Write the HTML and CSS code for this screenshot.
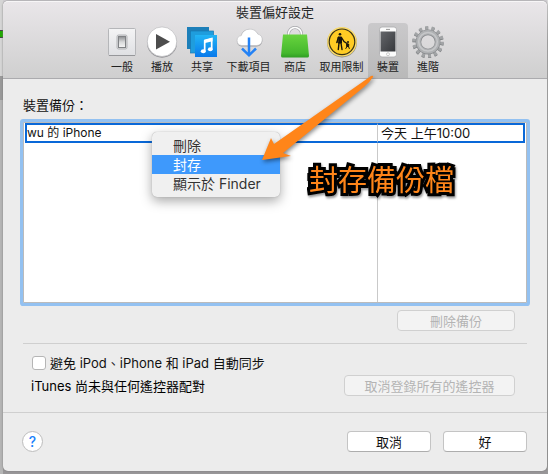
FILE: index.html
```html
<!DOCTYPE html>
<html lang="zh-Hant">
<head>
<meta charset="utf-8">
<title>裝置偏好設定</title>
<link rel="stylesheet" href="styles.css">
</head>
<body>
<main class="window">
  <header class="toolbar">
    <h1 class="title">裝置偏好設定</h1>
    <nav class="tabs">
      <button class="tab" type="button">
        <svg class="icon" viewBox="0 0 32 32"><defs><linearGradient id="plate" x2="0" y2="1"><stop stop-color="#f4f4f5"/><stop offset="1" stop-color="#dfe0e3"/></linearGradient><linearGradient id="knob" x2="0" y2="1"><stop stop-color="#8c8e91"/><stop offset=".5" stop-color="#d8d9da"/><stop offset="1" stop-color="#f6f6f6"/></linearGradient></defs><rect x="2.500" y="2.500" width="27" height="27" rx="1" fill="url(#plate)" stroke="#b5b6b9"/><path d="M3 29.500h26" stroke="#96979a"/><rect x="11" y="9" width="10" height="14" rx="1.500" fill="#d9dadc" stroke="#b3b4b7"/><rect x="12.500" y="10.500" width="7" height="11" fill="url(#knob)" stroke="#808285"/></svg>
        <span>一般</span>
      </button>
      <button class="tab" type="button">
        <svg class="icon" viewBox="0 0 32 32"><circle cx="16" cy="16.700" r="15" fill="#8f8f93"/><circle cx="16" cy="15.700" r="14.800" fill="#fff" stroke="#bcbcbf" stroke-width=".7"/><path d="M10 8v15.500l14-7.700z" fill="#4d4d4d"/></svg>
        <span>播放</span>
      </button>
      <button class="tab" type="button">
        <svg class="icon" viewBox="0 0 32 32"><defs><linearGradient id="note" x2="0" y2="1"><stop stop-color="#23b5f5"/><stop offset="1" stop-color="#0879eb"/></linearGradient></defs><rect x="1" y="1" width="22" height="22" fill="#1d7fb9"/><rect x="4.500" y="5" width="23" height="22" fill="#1f9ddd" stroke="#1878b2" stroke-width=".7"/><rect x="9" y="9" width="22" height="22" fill="url(#note)"/><path d="M18.700 25V14.800l7-1.900v10" fill="none" stroke="#fff" stroke-width="1.700"/><path d="M18 13.700l8.500-2.100v3.600L18 17.300z" fill="#fff"/><ellipse cx="17.300" cy="25.300" rx="2.500" ry="2" fill="#fff"/><ellipse cx="24.300" cy="23.200" rx="2.400" ry="2" fill="#fff"/></svg>
        <span>共享</span>
      </button>
      <button class="tab tab-wide" type="button">
        <svg class="icon" viewBox="0 0 32 32"><path d="M8.500 20.500a5.300 5.300 0 0 1-.8-10.300A9.300 9.300 0 0 1 25 8.400a6.200 6.200 0 0 1-1.300 12.100z" fill="#9c9ca0"/><path d="M8.500 19.500a5 5 0 0 1-.3-9.900 9 9 0 0 1 16.700-1.500 5.800 5.800 0 0 1-1.200 11.400z" fill="#fff" stroke="#c1c1c4" stroke-width=".7"/><path d="M16 11.500V29M9 22.500l7 6.800 7-6.800" fill="none" stroke="#2482f5" stroke-width="2.500"/></svg>
        <span>下載項目</span>
      </button>
      <button class="tab" type="button">
        <svg class="icon" viewBox="0 0 32 32"><defs><linearGradient id="bag" x2="0" y2="1"><stop stop-color="#68d43e"/><stop offset=".8" stop-color="#45b82d"/><stop offset="1" stop-color="#2f9e23"/></linearGradient></defs><path d="M9.500 12V8a6.500 6.500 0 0 1 13 0v4" fill="none" stroke="#a5a5a9" stroke-width="3"/><path d="M9.500 12V8a6.500 6.500 0 0 1 13 0v4" fill="none" stroke="#fff" stroke-width="1.600"/><path d="M4 8.500h24L30 30q-.2 1.500-1.500 1.500h-25Q2.200 31.500 2 30z" fill="url(#bag)"/></svg>
        <span>商店</span>
      </button>
      <button class="tab tab-wide" type="button">
        <svg class="icon" viewBox="0 0 32 32"><circle cx="16" cy="16.500" r="15" fill="#8f8e88"/><circle cx="16" cy="15.800" r="14.800" fill="#fbdc6c"/><circle cx="16" cy="15.800" r="12.800" fill="#ffcc24" stroke="#3a3314" stroke-width="1.200"/><g fill="#16140c" stroke="#16140c" stroke-linecap="round"><circle cx="14" cy="8.300" r="1.300" stroke="none"/><path d="M12.500 11h3v6h-3z"/><path d="M12.500 11.500l-1.700 5M15.500 11.500l2.500 4 3 2M13 17l-.7 6.500M15 17l1 6.500" fill="none" stroke-width="1.400"/><circle cx="22" cy="16" r="1" stroke="none"/><path d="M21 18h1.700v2.500h-1.700zM21 20.500l-1.200 2M22.500 20.500l.8 2" stroke-width="1"/></g></svg>
        <span>取用限制</span>
      </button>
      <button class="tab selected" type="button" aria-current="page">
        <svg class="icon" viewBox="0 0 32 32"><defs><linearGradient id="screen" x2="1" y2="1"><stop stop-color="#65676b"/><stop offset="1" stop-color="#36383c"/></linearGradient></defs><rect x="7.500" y="1" width="17" height="30" rx="2.500" fill="#fbfbfb" stroke="#a9aaac" stroke-width=".8"/><rect x="8.500" y="5.500" width="15" height="20" fill="url(#screen)"/><path d="M14 3.400h4" stroke="#999"/><circle cx="16" cy="28.200" r="1.500" fill="#fff" stroke="#b9b9b9" stroke-width=".7"/></svg>
        <span>裝置</span>
      </button>
      <button class="tab" type="button">
        <svg class="icon" viewBox="0 0 32 32"><g fill="none"><circle cx="16" cy="16.600" r="13.500" stroke="#7e8083" stroke-width="4.500" stroke-dasharray="2.800 3.259"/><circle cx="16" cy="15.800" r="13.500" stroke="#a2a4a6" stroke-width="4.500" stroke-dasharray="2.800 3.259"/><circle cx="16" cy="16" r="9.600" stroke="#87898c" stroke-width="5.600"/><circle cx="16" cy="15.800" r="9.600" stroke="#afb1b3" stroke-width="4.400"/><circle cx="16" cy="15.800" r="9.300" stroke="#c6c7c9" stroke-width="1.500"/></g></svg>
        <span>進階</span>
      </button>
    </nav>
  </header>

  <section class="content">
    <h2 class="list-label">裝置備份：</h2>
    <div class="list">
      <table class="backups" aria-label="裝置備份">
        <tbody>
          <tr class="focused"><td>wu 的 iPhone</td><td class="date">今天 上午10:00</td></tr>
          <tr class="filler"><td></td><td class="date"></td></tr>
        </tbody>
      </table>
    </div>
    <div class="list-actions"><button class="push medium" type="button" disabled>刪除備份</button></div>
    <div class="options">
      <label class="check"><input type="checkbox"><span>避免 iPod、iPhone 和 iPad 自動同步</span></label>
      <div class="remote">
        <p class="note">iTunes 尚未與任何遙控器配對</p>
        <button class="push large" type="button" disabled>取消登錄所有的遙控器</button>
      </div>
    </div>
  </section>

  <footer class="footer">
    <button class="help" type="button" aria-label="輔助說明">?</button>
    <button class="push small" type="button">取消</button>
    <button class="push small" type="button">好</button>
  </footer>

  <div class="menu" role="menu">
    <button type="button" role="menuitem">刪除</button>
    <button class="active" type="button" role="menuitem">封存</button>
    <button type="button" role="menuitem">顯示於 Finder</button>
  </div>
  <svg class="arrow" viewBox="0 0 116 90" aria-hidden="true"><path d="M112 2q3-1 2 1-3 5-9 10L24 79l8 3-29 4 9-22 3 6z" fill="#ff8519"/></svg>
  <p class="callout">封存備份檔</p>
</main>
</body>
</html>
```
FILE: styles.css
```css
* { box-sizing: border-box; }

body {
  margin: 0;
  min-height: 100vh;
  padding: 1px 1px 3px 3px;
  background:
    linear-gradient(#444 0 1px, #20a900 1px 7px, #444 7px 8px) 0 30px / 3px 8px no-repeat,
    linear-gradient(#d5d5d5 0 76px, #999 76px 100px, #b5b5b5 100px) 0 0 / 3px 100% no-repeat,
    linear-gradient(#ddd 0, #aaa 42px, #999) 100% 0 / 1px 100% no-repeat,
    linear-gradient(#cfcdd1 0 50%, #989698 50%);
  color: #111;
  font: 13px/20px Inter, "Noto Sans CJK TC", sans-serif;
}

button, input { margin: 0; font: inherit; color: inherit; }
h1, h2, p { margin: 0; font-size: inherit; font-weight: 400; }

.window {
  position: relative;
  background: #ececec;
  border-radius: 5px;
  box-shadow: 0 0 2px #777;
}

.toolbar {
  height: 78px;
  border-top: 1px solid #f7f6f7;
  border-bottom: 1px solid #ababae;
  border-radius: 5px 5px 0 0;
  background: linear-gradient(#e9e6e9, #cfcfcf);
}
.title { height: 21px; line-height: 21px; text-align: center; color: #262626; }

.tabs { display: flex; justify-content: center; height: 55px; }
.tab {
  display: flex;
  flex-direction: column;
  align-items: center;
  width: 40px;
  padding: 3px 0 0;
  border: 0;
  border-radius: 4px 4px 0 0;
  background: none;
  color: #222;
  font-size: 11px;
  line-height: 16px;
  white-space: nowrap;
}
.tab-wide { width: 53px; }
.tab.selected { background: linear-gradient(#cac9cb, #b9b9b9); }
.icon { flex: none; width: 32px; height: 32px; margin-bottom: 1px; }

.content { padding: 16px 20px; }
.list-label { height: 27px; }
.list {
  height: 181px;
  padding: 0 1px;
  border: 1px solid #bbb;
  background: #fff;
  border-radius: 1px;
  box-shadow: 0 0 0 3px #93c1f1;
}
.backups {
  width: 100%;
  height: 100%;
  border-collapse: separate;
  border-spacing: 0;
  table-layout: fixed;
  font-size: 12px;
  line-height: 16px;
}
.backups td { padding: 0; text-align: left; }
.backups .date { width: 148px; padding-left: 3px; font-size: 13px; border-left: 1px solid #c9c9c9; }
.focused { height: 20px; }
.focused td { border-top: 2px solid #0968d8; border-bottom: 2px solid #0968d8; }
.focused td:first-child { border-left: 2px solid #0968d8; }
.focused td:last-child { border-right: 2px solid #0968d8; }

.list-actions {
  display: flex;
  justify-content: flex-end;
  padding: 7px 12px 12px;
  border-bottom: 1px solid #cfcfcf;
}
.push {
  height: 21px;
  padding: 0 4px;
  border: 1px solid #c4c4c4;
  border-bottom-color: #adadad;
  border-radius: 4px;
  background: #fff;
  line-height: 18px;
}
.push:disabled { border-color: #d0d0d0; background: #f3f3f3; color: #b4b4b4; }
.small { width: 84px; }
.medium { width: 118px; }
.large { width: 171px; }

.options { padding: 8px 12px 0 8px; }
.check { display: flex; align-items: center; gap: 4px; height: 22px; }
.check input {
  appearance: none;
  width: 14px;
  height: 14px;
  margin-left: 1px;
  border: 1px solid #b5b5b5;
  border-radius: 3px;
  background: #fff;
}
.remote { display: flex; align-items: center; justify-content: space-between; margin-top: 1px; }
.note { color: #000; }

.footer {
  display: flex;
  align-items: center;
  gap: 12px;
  padding: 18px 20px 19px 19px;
  border-top: 1px solid #cfcfcf;
}
.help {
  width: 21px;
  height: 21px;
  margin-right: auto;
  padding: 0;
  border: 1px solid #bdbdbd;
  border-radius: 50%;
  background: #fff;
  color: #1a82fb;
  font-size: 14px;
  font-weight: 500;
  line-height: 18px;
}

.menu {
  position: absolute;
  left: 149px;
  top: 131px;
  width: 128px;
  padding: 4px 0;
  border-radius: 5px;
  background: #f0f0f0;
  box-shadow: 0 0 1px #999, 0 4px 12px rgb(0 0 0 / 35%);
}
.menu button {
  display: block;
  width: 100%;
  height: 19px;
  padding: 0 0 0 21px;
  border: 0;
  background: none;
  color: #333;
  font-size: 14px;
  line-height: 19px;
  text-align: left;
  white-space: nowrap;
}
.menu .active { background: #3e99fc; color: #fff; }

.arrow {
  position: absolute;
  left: 256px;
  top: 73px;
  width: 116px;
  height: 90px;
  filter: drop-shadow(1px 2px 2px rgb(0 0 0 / 45%));
}
.callout {
  position: absolute;
  left: 306px;
  top: 160px;
  color: #ff8519;
  font-size: 29px;
  line-height: 40px;
  white-space: nowrap;
  -webkit-text-stroke: 6px #000;
  paint-order: stroke fill;
  filter: drop-shadow(1px 2px 1px rgb(0 0 0 / 40%));
}
```
